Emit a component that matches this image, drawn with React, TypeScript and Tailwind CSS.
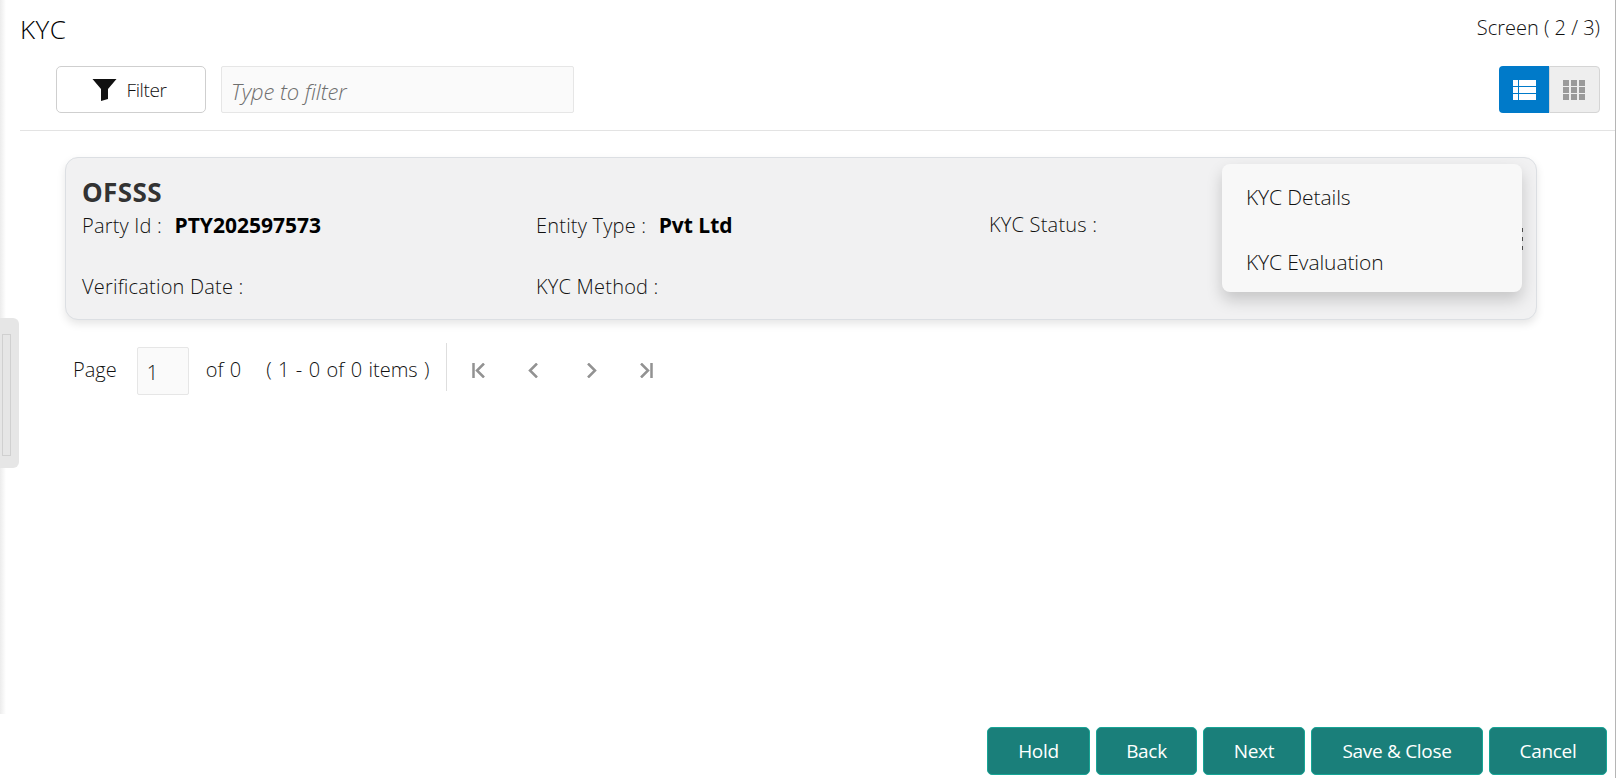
const font = { fontFamily: '"Open Sans", sans-serif' }

function FirstIcon() {
  return (
    <svg width="13" height="15" viewBox="0 0 13 15" fill="none" stroke="#929292" strokeWidth="2.5">
      <path d="M1.5 0v15M12 .5 5 7.5l7 7" />
    </svg>
  )
}

function PrevIcon() {
  return (
    <svg width="10" height="15" viewBox="0 0 10 15" fill="none" stroke="#929292" strokeWidth="2.5">
      <path d="M9 .5 2 7.5l7 7" />
    </svg>
  )
}

function NextIcon() {
  return (
    <svg width="10" height="15" viewBox="0 0 10 15" fill="none" stroke="#929292" strokeWidth="2.5">
      <path d="M1 .5 8 7.5l-7 7" />
    </svg>
  )
}

function LastIcon() {
  return (
    <svg width="13" height="15" viewBox="0 0 13 15" fill="none" stroke="#929292" strokeWidth="2.5">
      <path d="M11.5 0v15M1 .5 8 7.5l-7 7" />
    </svg>
  )
}

function FooterButton({ label, width }: { label: string; width: string }) {
  return (
    <button className={`h-[48px] ${width} rounded-[5px] border border-[#17a596] bg-[#1a7f7a] text-[19px] font-normal tracking-[-0.3px] text-white`}>
      {label}
    </button>
  )
}

export default function App() {
  return (
    <div style={font} className="relative flex h-[778px] w-[1616px] overflow-hidden bg-white font-light text-[#111]">
      {/* left strip and its handle */}
      <div className="h-[714px] w-[6px] shrink-0 bg-gradient-to-r from-[#ececec] to-white" />
      <div className="absolute left-0 top-[318px] flex h-[150px] w-[19px] items-center rounded-r-[6px] bg-[#e6e6e6] pl-[2px]">
        <div className="mt-[4px] h-[122px] w-[9px] border border-[#d0d0d0]" />
      </div>

      <div className="flex min-w-0 flex-1 flex-col border-r border-[#b5b5b5]">
        <div className="ml-[14px] flex h-[131px] flex-col border-b border-[#e3e3e3]">
          <div className="flex items-start justify-between pr-[15px]">
            <h1 className="pt-[11px] text-[26px] leading-[36px] tracking-[0.5px] text-black">KYC</h1>
            <span className="pt-[14px] text-[20px] leading-[28px]">Screen ( 2 / 3)</span>
          </div>
          <div className="mt-[19px] flex items-center justify-between pl-[36px] pr-[15px]">
            <div className="flex gap-[15px]">
              <button className="flex h-[47px] w-[150px] items-center justify-center gap-[10px] rounded-[5px] border border-[#cfcfcf] bg-white pr-[4px] text-[19px] tracking-[-0.4px]">
                <svg width="25" height="22" viewBox="0 0 24 22" fill="#111">
                  <path d="M0 0h24L15.5 10v10l-7 2V10z" />
                </svg>
                <span className="pt-[2px]">Filter</span>
              </button>
              <div className="flex h-[47px] w-[353px] items-center rounded-[2px] border border-[#e6e6e6] bg-[#fafafa] pl-[9px] pt-[3px] text-[22px] italic tracking-[-0.1px] text-[#6f6f6f]">
                Type to filter
              </div>
            </div>
            <div className="flex h-[47px]">
              <div className="flex w-[50px] items-center justify-center rounded-l-[4px] bg-[#007ac9]">
                <svg width="23" height="20" viewBox="0 0 23 20" fill="#fff">
                  <path d="M0 0h5v6H0zM6 0h17v6H6zM0 7h5v6H0zM6 7h17v6H6zM0 14h5v6H0zM6 14h17v6H6z" />
                </svg>
              </div>
              <div className="flex w-[51px] items-center justify-center rounded-r-[4px] border border-[#d5d5d5] bg-[#eeeeee] pr-[2px]">
                <svg width="22" height="20" viewBox="0 0 22 20" fill="#9a9a9a">
                  <path d="M0 0h6v6H0zM8 0h6v6H8zM16 0h6v6h-6zM0 7h6v6H0zM8 7h6v6H8zM16 7h6v6h-6zM0 14h6v6H0zM8 14h6v6H8zM16 14h6v6h-6z" />
                </svg>
              </div>
            </div>
          </div>
        </div>

        <div className="ml-[59px] mr-[78px] mt-[26px]">
          <div className="relative h-[163px] rounded-[13px] border border-[#dcdfe3] bg-[#f1f1f2] pl-[16px] pt-[19px] shadow-[0_4px_8px_rgba(0,0,0,0.1)]">
            <div className="text-[26px] font-bold leading-[30px] tracking-[0.4px] text-[#333]">OFSSS</div>
            <div className="grid grid-cols-[454px_453px_1fr] pt-[3px] text-[20px] leading-[30px] tracking-[0.2px]">
              <div>Party Id : <b className="ml-[7px] text-[21px] font-bold tracking-normal text-black">PTY202597573</b></div>
              <div>Entity Type : <b className="ml-[7px] text-[21px] font-bold tracking-normal text-black">Pvt Ltd</b></div>
              <div>KYC Status :</div>
              <div className="mt-[31px]">Verification Date :</div>
              <div className="mt-[31px]">KYC Method :</div>
            </div>
            <div className="absolute right-[13px] top-[70px] flex flex-col gap-[5px]">
              <span className="h-[4px] w-[3px] bg-[#555]" />
              <span className="h-[4px] w-[3px] bg-[#555]" />
              <span className="h-[4px] w-[3px] bg-[#555]" />
            </div>
            <div className="absolute left-[1156px] top-[6px] flex h-[128px] w-[300px] flex-col rounded-[8px] bg-[#f8f8f8] pl-[24px] pt-[1px] text-[21px] tracking-[-0.1px] shadow-[0_8px_16px_rgba(0,0,0,0.18)]">
              <div className="flex h-[65px] shrink-0 items-center">KYC Details</div>
              <div className="flex h-[65px] shrink-0 items-center">KYC Evaluation</div>
            </div>
          </div>

          <div className="mt-[27px] flex h-[48px] items-center pl-[8px] text-[20px] [word-spacing:1.2px]">
            <span className="mb-[2px]">Page</span>
            <div className="ml-[20px] flex h-[48px] w-[52px] items-center rounded-[2px] border border-[#e6e6e6] bg-[#fafafa] pl-[9px] pt-[4px]">1</div>
            <span className="mb-[2px] ml-[17px]">of 0</span>
            <span className="mb-[2px] ml-[25px]">( 1 - 0 of 0 items )</span>
            <div className="ml-[17px] h-[48px] w-px -translate-y-[4px] bg-[#dedede]" />
            <div className="mb-[2px] ml-[25px] flex items-center">
              <FirstIcon />
              <span className="ml-[43px] flex"><PrevIcon /></span>
              <span className="ml-[49px] flex"><NextIcon /></span>
              <span className="ml-[43px] flex"><LastIcon /></span>
            </div>
          </div>
        </div>

        <div className="mt-auto mb-[3px] flex justify-end gap-[6px] pr-[8px]">
          <FooterButton label="Hold" width="w-[103px]" />
          <FooterButton label="Back" width="w-[101px]" />
          <FooterButton label="Next" width="w-[102px]" />
          <FooterButton label="Save & Close" width="w-[172px]" />
          <FooterButton label="Cancel" width="w-[118px]" />
        </div>
      </div>
    </div>
  )
}
